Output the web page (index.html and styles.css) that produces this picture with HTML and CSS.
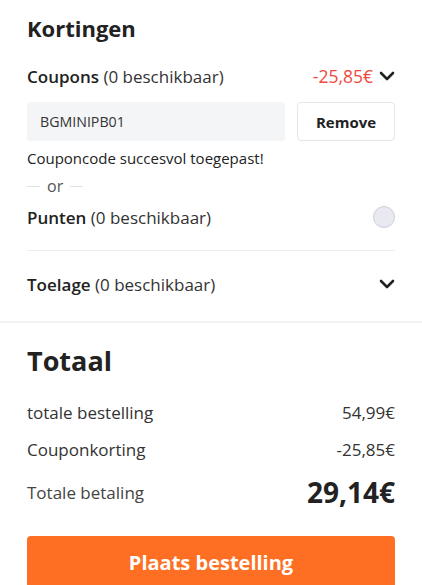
FILE: index.html
```html
<!DOCTYPE html>
<html lang="nl">
<head>
<meta charset="utf-8">
<link rel="stylesheet" href="styles.css">
</head>
<body>
<section class="section discounts">
  <h2 class="heading">Kortingen</h2>
  <div class="row coupons">
    <span class="label"><b>Coupons</b> (0 beschikbaar)</span>
    <span class="right"><span class="red">-25,85€</span>
      <svg class="chev" width="16" height="10" viewBox="0 0 16 10"><path d="M2 2l6 6 6-6" fill="none" stroke="#222" stroke-width="2.6" stroke-linecap="round" stroke-linejoin="round"/></svg>
    </span>
  </div>
  <div class="coupon-form">
    <div class="input">BGMINIPB01</div>
    <button class="remove">Remove</button>
  </div>
  <div class="success">Couponcode succesvol toegepast!</div>
  <div class="or"><span class="line"></span><span>or</span><span class="line"></span></div>
  <div class="row points">
    <span class="label"><b>Punten</b> (0 beschikbaar)</span>
    <span class="radio"></span>
  </div>
  <div class="divider"></div>
  <div class="row allowance">
    <span class="label"><b>Toelage</b> (0 beschikbaar)</span>
    <svg class="chev" width="16" height="10" viewBox="0 0 16 10"><path d="M2 2l6 6 6-6" fill="none" stroke="#222" stroke-width="2.6" stroke-linecap="round" stroke-linejoin="round"/></svg>
  </div>
</section>
<div class="sep"></div>
<section class="section totals">
  <h2 class="heading big">Totaal</h2>
  <div class="trow first"><span>totale bestelling</span><span>54,99€</span></div>
  <div class="trow"><span>Couponkorting</span><span>-25,85€</span></div>
  <div class="trow pay"><span class="pay-label">Totale betaling</span><span class="pay-value">29,14€</span></div>
  <button class="order">Plaats bestelling</button>
</section>
</body>
</html>
```
FILE: styles.css
```css
html, body { margin: 0; padding: 0; background: #fff; }
body { font-family: "Open Sans", "Noto Sans", sans-serif; color: #222; overflow: hidden; }
.section { padding: 0 27px; }
.discounts { padding-top: 14px; }
.heading { margin: 0; font-size: 22px; line-height: 28px; font-weight: 700; color: #222; }
.row { display: flex; align-items: center; justify-content: space-between; height: 24px; font-size: 17px; }
.label { color: #333; }
.label b { font-weight: 600; color: #222; }
.coupons { margin-top: 22px; }
.right { display: flex; align-items: center; gap: 6px; }
.red { color: #f04a3e; font-size: 17.5px; }
.chev { display: block; }
.coupon-form { display: flex; gap: 12px; margin-top: 14px; height: 39px; }
.input { flex: 1; background: #f4f5f7; border-radius: 3px; font-size: 14.2px; color: #333; padding-left: 13px; display: flex; align-items: center; }
.remove { width: 98px; height: 39px; background: #fff; border: 1px solid #e6e6e6; border-radius: 4px; font-family: inherit; font-size: 15px; font-weight: 700; color: #222; padding: 0; }
.success { margin-top: 7px; font-size: 15px; line-height: 20px; color: #222; }
.or { margin-top: 8px; display: flex; align-items: center; gap: 7px; font-size: 16px; line-height: 20px; color: #555; }
.or .line { display: block; width: 13px; height: 1px; background: #e2e2e2; }
.points { margin-top: 9px; }
.radio { width: 20px; height: 20px; border-radius: 50%; background: #e9e9f2; border: 1px solid #cfcfd6; }
.divider { height: 1px; background: #ececec; margin-top: 21px; }
.allowance { margin-top: 21px; }
.sep { height: 2px; background: #f3f3f3; margin-top: 25px; }
.totals { padding-top: 21px; }
.big { font-size: 27px; line-height: 34px; }
.trow { display: flex; justify-content: space-between; align-items: center; height: 24px; font-size: 17px; color: #333; margin-top: 13px; }
.trow.first { margin-top: 22px; }
.trow.pay { height: 32px; margin-top: 15px; }
.pay-label { color: #444; }
.pay-value { font-size: 28px; font-weight: 700; color: #222; }
.order { display: block; width: 100%; height: 52px; margin-top: 28px; background: #ff6f23; border: none; border-radius: 4px; color: #fff; font-family: inherit; font-size: 20px; font-weight: 700; padding: 0; }
```
